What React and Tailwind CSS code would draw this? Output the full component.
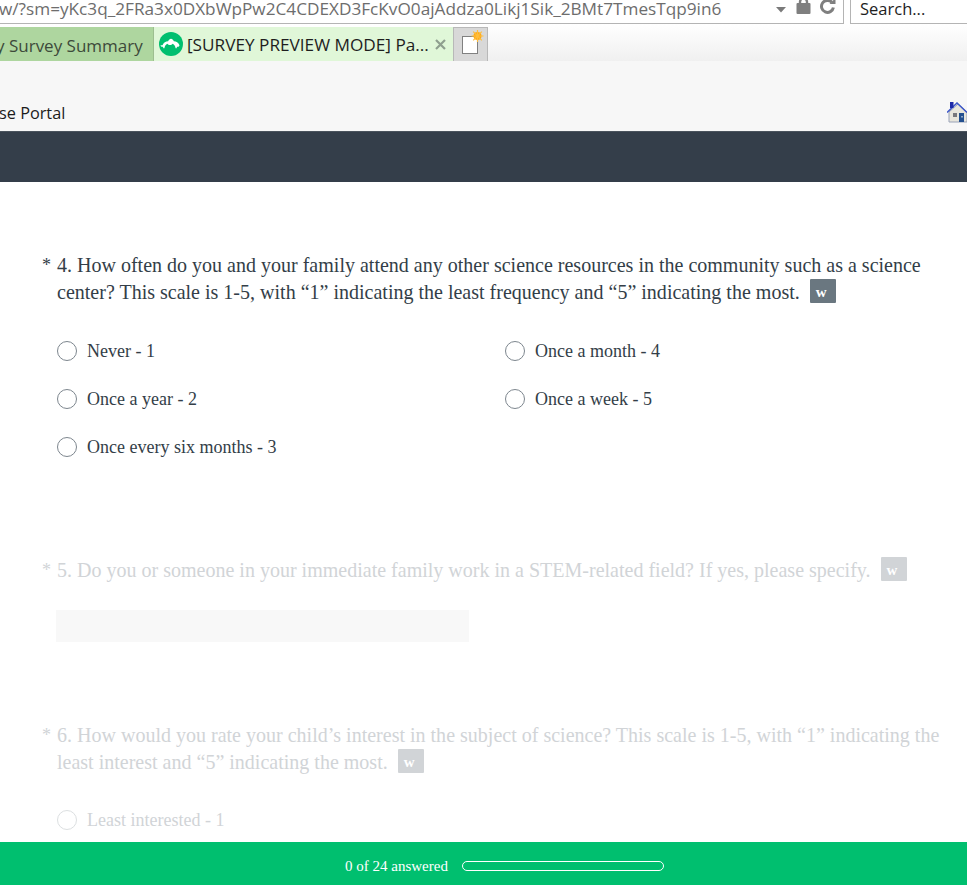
import React from "react";

const serif = "font-['Liberation_Serif',serif]";
const ui = "font-['Open_Sans',sans-serif]";

function Radio({ label, faded }) {
  return (
    <div className="flex h-12 items-center">
      <span className={`h-5 w-5 shrink-0 rounded-full border bg-white ${faded ? "border-[#dcdfe1]" : "border-[#7d868e]"}`} />
      <span className="ml-[10px] text-[18px] leading-6 whitespace-nowrap">{label}</span>
    </div>
  );
}

function Badge({ faded }) {
  return (
    <span className={`ml-[10px] inline-flex h-6 w-[26px] items-center rounded-[1px] pt-[2px] pl-[6px] align-top text-[15px] leading-none font-bold text-white ${faded ? "bg-[#d1d4d7]" : "bg-[#6a7780]"}`}>
      w
    </span>
  );
}

function Question({ children, faded }) {
  return (
    <div className="flex pl-[42px] pr-[20px] text-[20.03px] leading-[27px]">
      <span className={`w-[15px] shrink-0 text-[18px] ${faded ? "text-[#d1d4d7]" : "text-[#333e48]"}`}>*</span>
      <div>{children}</div>
    </div>
  );
}

function Logo() {
  return (
    <svg width="24" height="24" viewBox="0 0 24 24" className="shrink-0">
      <circle cx="12" cy="12" r="12" fill="#00bf6f" />
      <path d="M3.5 13.2c1-2.6 3.3-4 5.6-4 .7-1.5 1.8-2.4 2.9-2.4s2.2.9 2.9 2.4c2.3 0 4.6 1.4 5.6 4-.3 1-1 1.7-1.9 1.6-.6 0-.8.6-1 1.4h-1c-.3-2.2-1.3-3.7-3-4.4-.5.8-1.5 1.2-2.6 1.2s-2.1-.4-2.6-1.2c-1.7.7-2.7 2.2-3 4.4h-1c-.2-.8-.4-1.4-1-1.4-.9.1-1.6-.6-1.9-1.6z" fill="#fff" />
    </svg>
  );
}

function NewTabIcon() {
  return (
    <svg width="24" height="24" viewBox="0 0 24 24" className="overflow-visible">
      <rect x="3.5" y="3.5" width="15" height="17" fill="#fff" stroke="#808080" strokeWidth="1" />
      <circle cx="18.5" cy="3" r="4" fill="#ffa914" />
      <path d="M18.5 -3v12M12.5 3h12M14.2 -1.3l8.6 8.6M22.8 -1.3l-8.6 8.6" stroke="#ffbd3c" strokeWidth="1.2" />
    </svg>
  );
}

function HomeIcon() {
  return (
    <svg width="20" height="21" viewBox="0 0 20 21" className="shrink-0">
      <path d="M2 10v10h18V10L11 2z" fill="#e8e6dc" stroke="#9aa3b8" strokeWidth="1" />
      <path d="M0 10.5L10 1l10 9.5" fill="none" stroke="#3d57c9" strokeWidth="1.5" />
      <rect x="3" y="0" width="3.5" height="6" fill="#1d2aa8" />
      <rect x="6" y="11" width="4" height="4" fill="#77787c" />
      <rect x="12" y="11" width="5" height="9" fill="#24508f" />
      <rect x="14.5" y="14" width="1" height="1.5" fill="#fff" />
    </svg>
  );
}

export default function App() {
  return (
    <div className="flex h-[885px] w-[967px] flex-col overflow-hidden bg-white">
      {/* Address bar */}
      <div className={`flex h-6 shrink-0 bg-white ${ui}`}>
        <div className="flex h-6 w-[844px] items-center overflow-hidden border-r border-b border-[#b4b4b4] pb-[5px]">
          <span className="-ml-[1px] w-[772px] overflow-hidden text-[17.2px] leading-5 whitespace-nowrap text-[#6d6d6d]">
            w/?sm=yKc3q_2FRa3x0DXbWpPw2C4CDEXD3FcKvO0ajAddza0Likj1Sik_2BMt7TmesTqp9in6
          </span>
          <svg width="12" height="6" viewBox="0 0 12 6" className="ml-[4px] mt-[2px] shrink-0"><path d="M1 0h10L6 5.5z" fill="#7a7a7a" /></svg>
          <svg width="15" height="18" viewBox="0 0 15 18" className="ml-[9px] -mt-[5px] shrink-0">
            <path d="M4 7V4a3.5 3.5 0 017 0v3" fill="none" stroke="#7f7f7f" strokeWidth="2.4" />
            <rect x="0.5" y="5" width="14" height="11" rx="1" fill="#7f7f7f" />
          </svg>
          <svg width="17" height="18" viewBox="0 0 17 18" className="ml-[8px] -mt-[5px] shrink-0">
            <path d="M12.8 4.2A6 6 0 1014.4 9.5" fill="none" stroke="#7f7f7f" strokeWidth="3" />
            <path d="M10.5 6h6V0z" fill="#7f7f7f" />
          </svg>
        </div>
        <div className="ml-[6px] h-6 flex-1 border-b border-l border-[#b4b4b4] pl-[9px] text-[16.5px] leading-[18px] text-[#1e1e1e]">
          Search...
        </div>
      </div>

      {/* Tab strip */}
      <div className={`flex h-[37px] shrink-0 items-end bg-gradient-to-b from-white to-[#f0f0f0] ${ui}`}>
        <div className="flex h-[34px] w-[154px] items-center overflow-hidden border-r border-[#9dbf90] bg-[#aed69f] pt-[4px]">
          <span className="-ml-[4px] text-[17px] whitespace-nowrap text-[#3d4a3a]">y Survey Summary</span>
        </div>
        <div className="flex h-[34px] w-[299px] items-center bg-[#e0f7d8] pl-[5px]">
          <Logo />
          <span className="mt-[2px] ml-[4px] w-[248px] text-[17.2px] whitespace-nowrap text-[#1e1e1e]">[SURVEY PREVIEW MODE] Pa...</span>
          <svg width="11" height="11" viewBox="0 0 11 11" className="shrink-0"><path d="M1 1l9 9M10 1l-9 9" stroke="#8f9f8f" strokeWidth="2.2" /></svg>
        </div>
        <div className="flex h-[34px] w-[35px] items-center justify-center border-x border-t border-[#b8b8b8] bg-[#d8d8d8]">
          <NewTabIcon />
        </div>
      </div>

      {/* Page header */}
      <div className={`flex h-[70px] shrink-0 items-end justify-between bg-[#f7f7f7] pb-[6px] ${ui}`}>
        <span className="-ml-[1px] text-[16.3px] leading-6 text-[#1c1c1c]">se Portal</span>
        <span className="mb-[2px]"><HomeIcon /></span>
      </div>
      <div className="h-[51px] shrink-0 border-t border-[#4a535d] bg-[#343e4a]" />

      {/* Survey */}
      <div className={`min-h-0 flex-1 overflow-hidden pt-[70px] ${serif}`}>
        <Question>
          <div className="text-[#333e48]">
            4. How often do you and your family attend any other science resources in the community such as a science center? This scale is 1-5, with “1” indicating the least frequency and “5” indicating the most.
            <Badge />
          </div>
        </Question>
        <div className="mt-[21px] grid grid-flow-col grid-cols-[448px_1fr] grid-rows-3 pl-[57px] text-[#333e48]">
          <Radio label="Never - 1" />
          <Radio label="Once a year - 2" />
          <Radio label="Once every six months - 3" />
          <Radio label="Once a month - 4" />
          <Radio label="Once a week - 5" />
        </div>

        <div className="mt-[86px]">
          <Question faded>
            <div className="text-[#d1d4d7]">
              5. Do you or someone in your immediate family work in a STEM-related field? If yes, please specify.
              <Badge faded />
            </div>
          </Question>
        </div>
        <div className="mt-[26px] ml-[56px] h-8 w-[413px] bg-[#f8f8f8]" />

        <div className="mt-[80px]">
          <Question faded>
            <div className="text-[#d1d4d7]">
              6. How would you rate your child’s interest in the subject of science? This scale is 1-5, with “1” indicating the least interest and “5” indicating the most.
              <Badge faded />
            </div>
          </Question>
        </div>
        <div className="mt-[20px] pl-[57px] text-[#d1d4d7]">
          <Radio faded label="Least interested - 1" />
        </div>
      </div>

      {/* Progress footer */}
      <div className={`flex h-[43px] shrink-0 items-center bg-[#00bf6f] pt-[5px] pl-[345px] text-white ${serif}`}>
        <span className="text-[15px] leading-5 whitespace-nowrap">0 of 24 answered</span>
        <span className="ml-[14px] h-[10px] w-[202px] rounded-full border border-white" />
      </div>
    </div>
  );
}
